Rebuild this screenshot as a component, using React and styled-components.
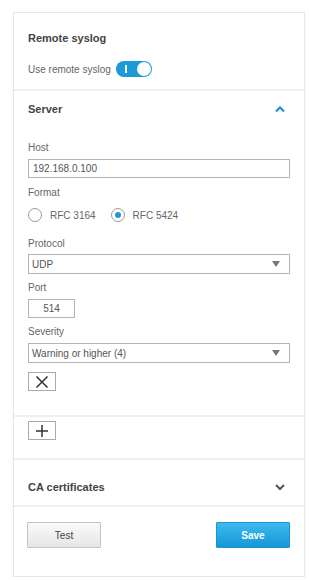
import React from "react";
import styled, { createGlobalStyle } from "styled-components";

const Global = createGlobalStyle`
  html, body { margin: 0; padding: 0; background: #fff; }
  body { font-family: "Liberation Sans", Arial, sans-serif; color: #444; }
  * { box-sizing: border-box; }
`;

const Card = styled.div`
  margin: 12px 5px 0 13px;
  width: 292px;
  border: 1px solid #e6e6e6;
  box-shadow: 0 1px 2px rgba(0,0,0,0.06);
  background: #fff;
`;

const Section = styled.div`
  padding: ${(p) => p.$pad || "0 14px"};
  border-top: ${(p) => (p.$divider ? "2px solid #efefef" : "none")};
`;

const Title = styled.div`
  font-size: 11px;
  font-weight: bold;
  color: #444;
  line-height: 16px;
`;

const Row = styled.div`
  display: flex;
  align-items: center;
  gap: ${(p) => p.$gap || "6px"};
  margin-top: ${(p) => p.$mt || "0"};
`;

const SmallText = styled.span`
  font-size: 10px;
  color: #666;
`;

const Toggle = styled.div`
  width: 36px;
  height: 16px;
  border-radius: 8px;
  background: #1b9ad8;
  display: flex;
  align-items: center;
  justify-content: space-between;
  padding: 0 1px 0 9px;
`;

const ToggleMark = styled.span`
  width: 2px;
  height: 8px;
  background: #fff;
`;

const Knob = styled.span`
  width: 14px;
  height: 14px;
  border-radius: 50%;
  background: #fff;
`;

const Header = styled.div`
  display: flex;
  align-items: center;
  justify-content: space-between;
  padding: ${(p) => p.$pad || "10px 0"};
`;

const Label = styled.div`
  font-size: 10px;
  color: #666;
  line-height: 14px;
  margin-top: ${(p) => p.$mt || "0"};
`;

const TextInput = styled.div`
  margin-top: ${(p) => p.$mt || "4px"};
  width: ${(p) => p.$w || "262px"};
  height: 19px;
  border: 1px solid #b4b4b4;
  font-size: 10px;
  color: #555;
  line-height: 17px;
  padding: 0 4px;
  text-align: ${(p) => p.$align || "left"};
`;

const Select = styled.div`
  margin-top: ${(p) => p.$mt || "3px"};
  width: 262px;
  height: 20px;
  border: 1px solid #b4b4b4;
  font-size: 10px;
  color: #555;
  display: flex;
  align-items: center;
  justify-content: space-between;
  padding: 0 9px 0 3px;
`;

const Arrow = styled.span`
  width: 0;
  height: 0;
  border-left: 4px solid transparent;
  border-right: 4px solid transparent;
  border-top: 6px solid #777;
`;

const Radio = styled.span`
  width: 14px;
  height: 14px;
  border-radius: 50%;
  border: 1px solid #999;
  background: #fff;
  display: flex;
  align-items: center;
  justify-content: center;
  &::after {
    content: "";
    width: 6px;
    height: 6px;
    border-radius: 50%;
    background: ${(p) => (p.$checked ? "#1b9ad8" : "transparent")};
  }
`;

const RadioLabel = styled.span`
  font-size: 10px;
  color: #666;
  margin-right: 7px;
`;

const IconBtn = styled.div`
  margin-top: ${(p) => p.$mt || "0"};
  width: 28px;
  height: 19px;
  border: 1px solid #aaa;
  background: #fff;
  display: flex;
  align-items: center;
  justify-content: center;
`;

const Footer = styled.div`
  display: flex;
  justify-content: space-between;
  padding: 15px 14px 28px 13px;
  border-top: 2px solid #efefef;
`;

const Button = styled.div`
  width: 74px;
  height: 26px;
  display: flex;
  align-items: center;
  justify-content: center;
  font-size: 10px;
  border-radius: 1px;
  ${(p) =>
    p.$primary
      ? `background: linear-gradient(#3cbaf0, #1697d6); color: #fff; font-weight: bold; border: 1px solid #1a95d2;`
      : `background: linear-gradient(#fafafa, #e6e6e6); color: #444; border: 1px solid #c4c4c4;`}
`;

const Chevron = ({ up, color }) => (
  <svg width="12" height="8" viewBox="0 0 12 8">
    <path
      d={up ? "M2 6.5 L6 2.5 L10 6.5" : "M2 2 L6 6 L10 2"}
      fill="none"
      stroke={color}
      strokeWidth="2"
    />
  </svg>
);

export default function App() {
  return (
    <>
      <Global />
      <Card>
        <Section $pad="17px 14px 12px 14px">
          <Title>Remote syslog</Title>
          <Row $mt="15px" $gap="5px">
            <SmallText>Use remote syslog</SmallText>
            <Toggle>
              <ToggleMark />
              <Knob />
            </Toggle>
          </Row>
        </Section>
        <Section $divider $pad="0 14px 24px 14px">
          <Header $pad="10px 4px 11px 0">
            <Title>Server</Title>
            <Chevron up color="#1a8fcb" />
          </Header>
          <Label $mt="13px">Host</Label>
          <TextInput>192.168.0.100</TextInput>
          <Label $mt="8px">Format</Label>
          <Row $mt="8px" $gap="8px">
            <Radio />
            <RadioLabel>RFC 3164</RadioLabel>
            <Radio $checked />
            <RadioLabel>RFC 5424</RadioLabel>
          </Row>
          <Label $mt="15px">Protocol</Label>
          <Select>
            UDP
            <Arrow />
          </Select>
          <Label $mt="7px">Port</Label>
          <TextInput $w="47px" $align="center">514</TextInput>
          <Label $mt="7px">Severity</Label>
          <Select $mt="4px">
            Warning or higher (4)
            <Arrow />
          </Select>
          <IconBtn $mt="9px">
            <svg width="14" height="14" viewBox="0 0 14 14">
              <path d="M1.5 1.5 L12.5 12.5 M12.5 1.5 L1.5 12.5" stroke="#333" strokeWidth="1.5" />
            </svg>
          </IconBtn>
        </Section>
        <Section $divider $pad="4px 14px 18px 14px">
          <IconBtn>
            <svg width="14" height="14" viewBox="0 0 14 14">
              <path d="M7 1 V13 M1 7 H13" stroke="#333" strokeWidth="1.5" />
            </svg>
          </IconBtn>
        </Section>
        <Section $divider $pad="0 14px">
          <Header $pad="19px 4px 10px 0">
            <Title>CA certificates</Title>
            <Chevron color="#555" />
          </Header>
        </Section>
        <Footer>
          <Button>Test</Button>
          <Button $primary>Save</Button>
        </Footer>
      </Card>
    </>
  );
}
